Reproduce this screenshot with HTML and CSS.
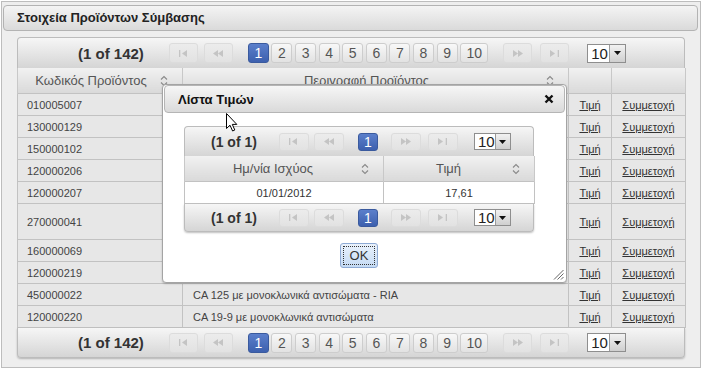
FILE: index.html
```html
<!DOCTYPE html>
<html lang="el">
<head>
    <meta charset="UTF-8">
    <meta name="viewport" content="width=device-width, initial-scale=1.0">
    <title>Στοιχεία Προϊόντων Σύμβασης</title>
    <link rel="stylesheet" href="styles.css">
</head>
<body>
    <div class="panel">
        <div class="panel-title">Στοιχεία Προϊόντων Σύμβασης</div>

        <div class="datatable">
            <div class="paginator top">
                <span class="report">(1 of 142)</span>
                <span class="pbtn nav first"><svg width="9" height="7" viewBox="0 0 9 7"><rect x="0" y="0" width="1.3" height="7"/><path d="M8 0 L3 3.5 L8 7 Z"/></svg></span>
                <span class="pbtn nav prev"><svg width="10" height="7" viewBox="0 0 10 7"><path d="M5 0 L0 3.5 L5 7 Z M10 0 L5 3.5 L10 7 Z"/></svg></span>
                <span class="pbtn page active">1</span>
                <span class="pbtn page">2</span>
                <span class="pbtn page">3</span>
                <span class="pbtn page">4</span>
                <span class="pbtn page">5</span>
                <span class="pbtn page">6</span>
                <span class="pbtn page">7</span>
                <span class="pbtn page">8</span>
                <span class="pbtn page">9</span>
                <span class="pbtn page wide">10</span>
                <span class="pbtn nav next"><svg width="10" height="7" viewBox="0 0 10 7"><path d="M0 0 L5 3.5 L0 7 Z M5 0 L10 3.5 L5 7 Z"/></svg></span>
                <span class="pbtn nav last"><svg width="9" height="7" viewBox="0 0 9 7"><path d="M0 0 L5 3.5 L0 7 Z"/><rect x="7.7" y="0" width="1.3" height="7"/></svg></span>
                <span class="rows-select"><span class="val">10</span><span class="arrow"><svg width="7" height="4" viewBox="0 0 7 4"><path d="M0 0 L7 0 L3.5 4 Z"/></svg></span></span>
            </div>

            <table class="grid">
                <colgroup>
                    <col class="c-code">
                    <col class="c-desc">
                    <col class="c-price">
                    <col class="c-part">
                </colgroup>
                <thead>
                    <tr>
                        <th><div class="th-in"><span class="label">Κωδικός Προϊόντος</span><svg class="sort" width="8" height="12" viewBox="0 0 8 12"><path d="M1 4.5 L4 1.5 L7 4.5 M1 7.5 L4 10.5 L7 7.5"/></svg></div></th>
                        <th><div class="th-in"><span class="label">Περιγραφή Προϊόντος</span><svg class="sort" width="8" height="12" viewBox="0 0 8 12"><path d="M1 4.5 L4 1.5 L7 4.5 M1 7.5 L4 10.5 L7 7.5"/></svg></div></th>
                        <th></th>
                        <th></th>
                    </tr>
                </thead>
                <tbody>
                    <tr><td>010005007</td><td class="desc"></td><td class="lnk"><a href="#">Τιμή</a></td><td class="lnk"><a href="#">Συμμετοχή</a></td></tr>
                    <tr><td>130000129</td><td class="desc"></td><td class="lnk"><a href="#">Τιμή</a></td><td class="lnk"><a href="#">Συμμετοχή</a></td></tr>
                    <tr><td>150000102</td><td class="desc"></td><td class="lnk"><a href="#">Τιμή</a></td><td class="lnk"><a href="#">Συμμετοχή</a></td></tr>
                    <tr><td>120000206</td><td class="desc"></td><td class="lnk"><a href="#">Τιμή</a></td><td class="lnk"><a href="#">Συμμετοχή</a></td></tr>
                    <tr><td>120000207</td><td class="desc"></td><td class="lnk"><a href="#">Τιμή</a></td><td class="lnk"><a href="#">Συμμετοχή</a></td></tr>
                    <tr class="tall"><td>270000041</td><td class="desc"></td><td class="lnk"><a href="#">Τιμή</a></td><td class="lnk"><a href="#">Συμμετοχή</a></td></tr>
                    <tr><td>160000069</td><td class="desc"></td><td class="lnk"><a href="#">Τιμή</a></td><td class="lnk"><a href="#">Συμμετοχή</a></td></tr>
                    <tr><td>120000219</td><td class="desc"></td><td class="lnk"><a href="#">Τιμή</a></td><td class="lnk"><a href="#">Συμμετοχή</a></td></tr>
                    <tr><td>450000022</td><td class="desc">CA 125 με μονοκλωνικά αντισώματα - RIA</td><td class="lnk"><a href="#">Τιμή</a></td><td class="lnk"><a href="#">Συμμετοχή</a></td></tr>
                    <tr><td>120000220</td><td class="desc">CA 19-9 με μονοκλωνικά αντισώματα</td><td class="lnk"><a href="#">Τιμή</a></td><td class="lnk"><a href="#">Συμμετοχή</a></td></tr>
                </tbody>
            </table>

            <div class="paginator bottom">
                <span class="report">(1 of 142)</span>
                <span class="pbtn nav first"><svg width="9" height="7" viewBox="0 0 9 7"><rect x="0" y="0" width="1.3" height="7"/><path d="M8 0 L3 3.5 L8 7 Z"/></svg></span>
                <span class="pbtn nav prev"><svg width="10" height="7" viewBox="0 0 10 7"><path d="M5 0 L0 3.5 L5 7 Z M10 0 L5 3.5 L10 7 Z"/></svg></span>
                <span class="pbtn page active">1</span>
                <span class="pbtn page">2</span>
                <span class="pbtn page">3</span>
                <span class="pbtn page">4</span>
                <span class="pbtn page">5</span>
                <span class="pbtn page">6</span>
                <span class="pbtn page">7</span>
                <span class="pbtn page">8</span>
                <span class="pbtn page">9</span>
                <span class="pbtn page wide">10</span>
                <span class="pbtn nav next"><svg width="10" height="7" viewBox="0 0 10 7"><path d="M0 0 L5 3.5 L0 7 Z M5 0 L10 3.5 L5 7 Z"/></svg></span>
                <span class="pbtn nav last"><svg width="9" height="7" viewBox="0 0 9 7"><path d="M0 0 L5 3.5 L0 7 Z"/><rect x="7.7" y="0" width="1.3" height="7"/></svg></span>
                <span class="rows-select"><span class="val">10</span><span class="arrow"><svg width="7" height="4" viewBox="0 0 7 4"><path d="M0 0 L7 0 L3.5 4 Z"/></svg></span></span>
            </div>
        </div>

        <!-- παράθυρο λίστας τιμών -->
        <div class="dialog">
            <div class="dialog-title">
                <span>Λίστα Τιμών</span>
                <svg class="close" width="10" height="10" viewBox="0 0 10 10"><path d="M1.5 1.5 L8.5 8.5 M8.5 1.5 L1.5 8.5"/></svg>
            </div>
            <div class="dialog-body">
                <div class="datatable small">
                    <div class="paginator top">
                        <span class="report">(1 of 1)</span>
                        <span class="pbtn nav first"><svg width="9" height="7" viewBox="0 0 9 7"><rect x="0" y="0" width="1.3" height="7"/><path d="M8 0 L3 3.5 L8 7 Z"/></svg></span>
                        <span class="pbtn nav prev"><svg width="10" height="7" viewBox="0 0 10 7"><path d="M5 0 L0 3.5 L5 7 Z M10 0 L5 3.5 L10 7 Z"/></svg></span>
                        <span class="pbtn page active">1</span>
                        <span class="pbtn nav next"><svg width="10" height="7" viewBox="0 0 10 7"><path d="M0 0 L5 3.5 L0 7 Z M5 0 L10 3.5 L5 7 Z"/></svg></span>
                        <span class="pbtn nav last"><svg width="9" height="7" viewBox="0 0 9 7"><path d="M0 0 L5 3.5 L0 7 Z"/><rect x="7.7" y="0" width="1.3" height="7"/></svg></span>
                        <span class="rows-select"><span class="val">10</span><span class="arrow"><svg width="7" height="4" viewBox="0 0 7 4"><path d="M0 0 L7 0 L3.5 4 Z"/></svg></span></span>
                    </div>
                    <table class="grid">
                        <colgroup>
                            <col class="c-date">
                            <col class="c-value">
                        </colgroup>
                        <thead>
                            <tr>
                                <th class="h-date"><div class="th-in"><span class="label">Ημ/νία Ισχύος</span><svg class="sort" width="8" height="12" viewBox="0 0 8 12"><path d="M1 4.5 L4 1.5 L7 4.5 M1 7.5 L4 10.5 L7 7.5"/></svg></div></th>
                                <th class="h-value"><div class="th-in"><span class="label">Τιμή</span><svg class="sort" width="8" height="12" viewBox="0 0 8 12"><path d="M1 4.5 L4 1.5 L7 4.5 M1 7.5 L4 10.5 L7 7.5"/></svg></div></th>
                            </tr>
                        </thead>
                        <tbody>
                            <tr><td>01/01/2012</td><td>17,61</td></tr>
                        </tbody>
                    </table>
                    <div class="paginator bottom">
                        <span class="report">(1 of 1)</span>
                        <span class="pbtn nav first"><svg width="9" height="7" viewBox="0 0 9 7"><rect x="0" y="0" width="1.3" height="7"/><path d="M8 0 L3 3.5 L8 7 Z"/></svg></span>
                        <span class="pbtn nav prev"><svg width="10" height="7" viewBox="0 0 10 7"><path d="M5 0 L0 3.5 L5 7 Z M10 0 L5 3.5 L10 7 Z"/></svg></span>
                        <span class="pbtn page active">1</span>
                        <span class="pbtn nav next"><svg width="10" height="7" viewBox="0 0 10 7"><path d="M0 0 L5 3.5 L0 7 Z M5 0 L10 3.5 L5 7 Z"/></svg></span>
                        <span class="pbtn nav last"><svg width="9" height="7" viewBox="0 0 9 7"><path d="M0 0 L5 3.5 L0 7 Z"/><rect x="7.7" y="0" width="1.3" height="7"/></svg></span>
                        <span class="rows-select"><span class="val">10</span><span class="arrow"><svg width="7" height="4" viewBox="0 0 7 4"><path d="M0 0 L7 0 L3.5 4 Z"/></svg></span></span>
                    </div>
                </div>
                <div class="actions">
                    <button class="ok-btn"><span>OK</span></button>
                </div>
            </div>
            <svg class="grip" width="11" height="11" viewBox="0 0 11 11"><path d="M10.5 1 L1 10.5 M10.5 4.5 L4.5 10.5 M10.5 8 L8 10.5"/></svg>
        </div>

        <svg class="cursor" width="12" height="19" viewBox="0 0 12 19"><path d="M0.5 0.5 L0.5 15.5 L4 12.2 L6.6 18 L8.8 17 L6.3 11.4 L10.8 11.4 Z"/></svg>
    </div>
</body>
</html>
```

FILE: styles.css
```css
body {
    margin: 0;
    font-family: "Liberation Sans", Arial, sans-serif;
    background-color: #fff;
}
.panel {
    position: relative;
    box-sizing: border-box;
    width: 700px;
    height: 367px;
    margin: 1px 0 0 1px;
    padding: 3px 2px 0 1px;
    border: 1px solid #bdbdbd;
    background-color: #eeeeee;
}
.panel-title {
    box-sizing: border-box;
    height: 26px;
    padding-left: 13px;
    border: 1px solid #b3b3b3;
    border-radius: 4px;
    background: linear-gradient(#f4f4f4, #dadada);
    font-size: 13px;
    font-weight: bold;
    line-height: 24px;
    color: #222;
}

/* πίνακας */
.datatable {
    width: 668px;
    margin: 6px 0 0 14px;
}
.paginator {
    display: flex;
    align-items: center;
    box-sizing: border-box;
    height: 31px;
    border: 1px solid #bcbcbc;
    background: linear-gradient(#f6f6f6, #d5d5d5);
    color: #333;
}
.paginator.top {
    border-bottom: none;
    border-radius: 4px 4px 0 0;
}
.paginator.bottom {
    height: 30px;
    border-top: none;
    border-radius: 0 0 4px 4px;
    box-shadow: 0 1px 2px rgba(0,0,0,0.25);
}
.report {
    margin: 0 25px 0 60px;
    font-size: 15px;
    font-weight: bold;
    white-space: nowrap;
}
.pbtn {
    display: flex;
    align-items: center;
    justify-content: center;
    box-sizing: border-box;
    height: 20px;
    border: 1px solid #cdcdcd;
    border-radius: 3px;
    background: linear-gradient(#f8f8f8, #e2e2e2);
    font-size: 14px;
    color: #555;
}
.pbtn.nav {
    width: 29px;
    border-color: #dcdcdc;
    background: linear-gradient(#ececec, #e2e2e2);
}
.pbtn.nav svg {
    fill: #c4c4c4;
}
.pbtn.prev {
    margin-left: 6px;
}
.pbtn.page {
    width: 21px;
    margin-left: 2.6px;
}
.pbtn.prev + .page {
    margin-left: 15px;
}
.pbtn.page.wide {
    width: 28px;
}
.pbtn.active {
    border-color: #3a5a9e;
    background: linear-gradient(#5b7fcb, #3d60ae);
    color: #fff;
}
.pbtn.next {
    margin-left: 15px;
}
.pbtn.last {
    margin-left: 8px;
}
.rows-select {
    display: flex;
    box-sizing: border-box;
    width: 39px;
    height: 19px;
    margin-left: 18px;
    border: 1px solid #8e8e8e;
    background-color: #fff;
}
.rows-select .val {
    flex: 1;
    padding-left: 3px;
    font-size: 15px;
    line-height: 17px;
    color: #222;
}
.rows-select .arrow {
    display: flex;
    align-items: center;
    justify-content: center;
    width: 15px;
    border-left: 1px solid #9a9a9a;
    background: linear-gradient(#f2f2f2, #cfcfcf);
}
.rows-select .arrow svg {
    fill: #111;
}

.grid {
    width: 100%;
    border-collapse: collapse;
    table-layout: fixed;
}
.c-code { width: 165px; }
.c-desc { width: 386px; }
.c-price { width: 43px; }
.c-part { width: 74px; }
.grid th {
    height: 25px;
    padding: 0;
    border-left: 1px solid #c8c8c8;
    border-right: 1px solid #c8c8c8;
    background: linear-gradient(#f1f1f1, #d9d9d9);
    font-size: 13px;
    font-weight: normal;
    color: #555;
}
.th-in {
    display: flex;
    align-items: center;
}
.th-in .label {
    flex: 1;
    padding-left: 8px;
    text-align: center;
    white-space: nowrap;
}
.sort {
    margin: 0 14px 0 4px;
    fill: none;
    stroke: #8a8a8a;
    stroke-width: 1.1;
}
.grid td {
    height: 21px;
    padding: 0 0 0 9px;
    border: 1px solid #c2c2c2;
    background-color: #e7e7e7;
    font-size: 11px;
    color: #444;
    white-space: nowrap;
    overflow: hidden;
}
.grid td.desc {
    padding-left: 10px;
}
.grid tr.tall td {
    height: 35px;
}
.grid td.lnk {
    padding: 0;
    text-align: center;
}
.grid td.lnk a {
    color: #333;
}

/* παράθυρο */
.dialog {
    position: absolute;
    left: 160px;
    top: 82px;
    box-sizing: border-box;
    width: 405px;
    height: 199px;
    padding: 0 1px;
    border: 1px solid #a4a4a4;
    border-radius: 4px;
    background-color: #fff;
    box-shadow: 0 1px 2px rgba(0,0,0,0.2);
}
.dialog-title {
    display: flex;
    align-items: center;
    justify-content: space-between;
    box-sizing: border-box;
    width: 401px;
    height: 28px;
    padding: 0 10px 0 13px;
    border: 1px solid #b5b5b5;
    border-radius: 4px;
    background: linear-gradient(#f6f6f6, #dadada);
    font-size: 13px;
    font-weight: bold;
    color: #111;
}
.close {
    fill: none;
    stroke: #111;
    stroke-width: 2.4;
}
.dialog-body {
    width: 350px;
    padding: 13px 0 0 20px;
}
.datatable.small {
    width: 350px;
    margin: 0;
}
.small .paginator.top {
    height: 30px;
}
.small .paginator.bottom {
    height: 28px;
}
.small .report {
    margin: 0 22px 0 26px;
    font-size: 14px;
}
.small .pbtn {
    height: 18px;
}
.small .pbtn.nav {
    width: 30px;
}
.small .pbtn.prev {
    margin-left: 5px;
}
.small .pbtn.page {
    width: 20px;
    margin-left: 14px;
}
.small .pbtn.next {
    margin-left: 13px;
}
.small .pbtn.last {
    margin-left: 7px;
}
.small .rows-select {
    width: 37px;
    height: 17px;
    margin-left: 16px;
}
.small .rows-select .val {
    line-height: 15px;
}
.c-date { width: 199px; }
.c-value { width: 151px; }
.small .grid th.h-date .label {
    padding-left: 4px;
}
.small .grid th.h-value .label {
    padding-left: 5px;
}
.small .grid td {
    padding: 0;
    background-color: #fff;
    text-align: center;
    color: #333;
}
.actions {
    display: flex;
    justify-content: center;
    margin-top: 11px;
}
.ok-btn {
    box-sizing: border-box;
    width: 38px;
    height: 25px;
    padding: 2px;
    border: 1px solid #8eaad4;
    border-radius: 3px;
    background: linear-gradient(#eaf2fc, #c4daf4);
    font-family: "Liberation Sans", Arial, sans-serif;
    font-size: 13px;
    color: #333;
}
.ok-btn span {
    display: block;
    height: 100%;
    box-sizing: border-box;
    border: 1px dotted #333;
    line-height: 17px;
}
.grip {
    position: absolute;
    right: 2px;
    bottom: 2px;
    fill: none;
    stroke: #666;
    stroke-width: 1;
}
.cursor {
    position: absolute;
    left: 224px;
    top: 111px;
    fill: #fff;
    stroke: #000;
    stroke-width: 1;
}
```
